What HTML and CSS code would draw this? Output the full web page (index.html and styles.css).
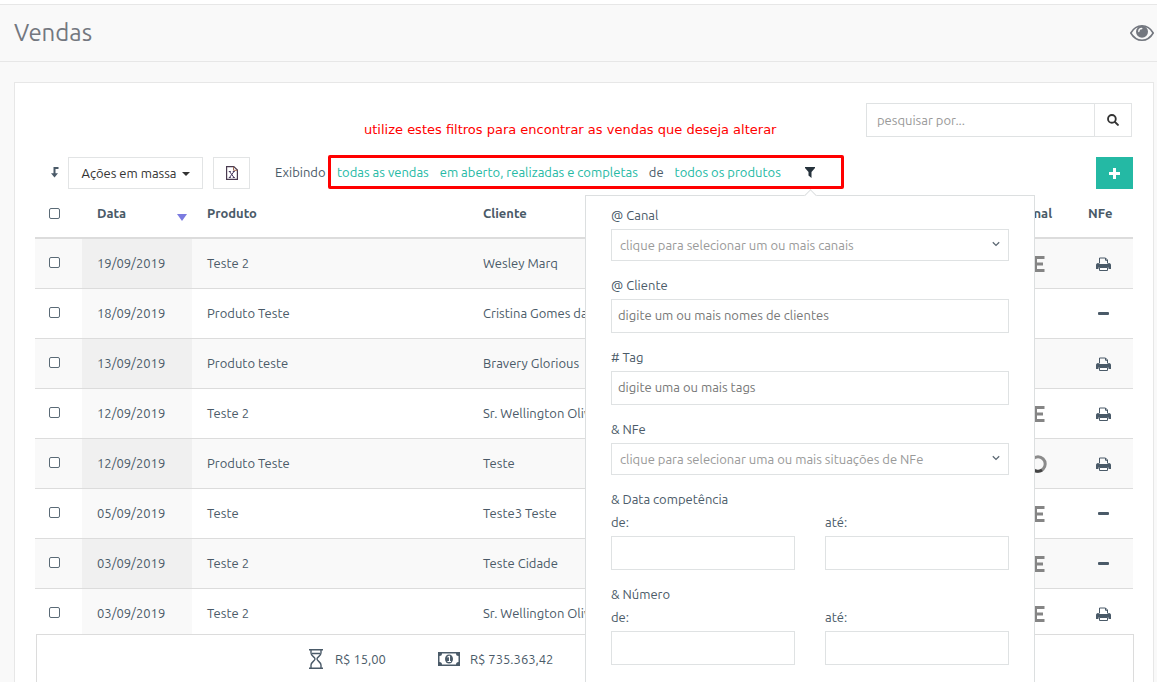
FILE: index.html
```html
<!DOCTYPE html>
<html lang="pt-BR">
<head>
<meta charset="utf-8">
<title>Vendas</title>
<link rel="stylesheet" href="styles.css">
</head>
<body>
<svg class="sprite" aria-hidden="true">
  <symbol id="print" viewBox="0 0 15 14"><path d="M3.500 6.500V1h6l2 2v3.500M9.500 1v2.300h2" fill="none" stroke="currentColor"/><path d="M0 8.200C0 7 .8 6 2 6h.8v1h9.400V6h.8c1.200 0 2 1 2 2.200V12h-2.500v-1.500h-10V12H0z" fill="currentColor"/><path d="M3.500 10.500h8v3h-8z" fill="#fff" stroke="currentColor"/></symbol>
  <symbol id="dash" viewBox="0 0 15 14"><rect x="2" y="5" width="11" height="3" rx="1" fill="currentColor"/></symbol>
  <symbol id="letter" viewBox="0 0 14 18"><path d="M13.500 2.500H4.500v13h9M4.500 9H12" fill="none" stroke="#858585" stroke-width="3"/></symbol>
  <symbol id="ring" viewBox="0 0 18 18"><circle cx="9" cy="9" r="7.200" fill="none" stroke="#8b8b8b" stroke-width="3"/><path d="M3.500 13.700a7.200 7.200 0 0 0 9.500 1.300" fill="none" stroke="#444" stroke-width="3"/></symbol>
  <symbol id="chevron" viewBox="0 0 8 6"><path d="M.8 1.200 4 4.400l3.200-3.200" fill="none" stroke="#5c6873" stroke-width="1.300"/></symbol>
</svg>

<header class="page-header">
  <h1 class="page-title">Vendas</h1>
  <button class="icon-button eye" type="button" aria-label="Visualizar">
    <svg width="24" height="16" viewBox="0 0 24 16"><path d="M.8 8C3.500 3.300 7.300.8 12 .8S20.500 3.300 23.200 8C20.500 12.700 16.700 15.200 12 15.200S3.500 12.700.8 8z" fill="none" stroke="currentColor" stroke-width="1.600"/><circle cx="12" cy="6.800" r="6" fill="currentColor"/><path d="M8.800 6.500a3 3 0 0 1 3-3" fill="none" stroke="#f9f9f9" stroke-width="1.300" stroke-linecap="round"/></svg>
  </button>
</header>

<main class="card">
  <form class="search" role="search">
    <input class="search-input" type="text" placeholder="pesquisar por..." aria-label="Pesquisar">
    <button class="search-button" type="button" aria-label="Pesquisar">
      <svg width="12" height="12" viewBox="0 0 13 13"><circle cx="5.300" cy="5.300" r="4.200" fill="none" stroke="currentColor" stroke-width="2"/><path d="m8.500 8.500 3.300 3.300" stroke="currentColor" stroke-width="2.200" stroke-linecap="round"/></svg>
    </button>
    <p class="note">utilize estes filtros para encontrar as vendas que deseja alterar</p>
  </form>

  <div class="toolbar">
    <svg class="level" width="8" height="11" viewBox="0 0 8 11"><path d="M7.500 1H3.500v6" fill="none" stroke="currentColor" stroke-width="2"/><path d="M0 6.300h7L3.500 10.500z" fill="currentColor"/></svg>
    <button class="button bulk" type="button">Ações em massa <span class="caret"></span></button>
    <button class="button export" type="button" aria-label="Exportar Excel">
      <svg width="12" height="14" viewBox="0 0 12 14"><path d="M.6.600h7.200l3.600 3.500v9.300H.6z" fill="none" stroke="#4a3b50" stroke-width="1.200"/><path d="M7.500.800v3.500h3.700" fill="none" stroke="#a06a50"/><path d="m3.500 5.500 4.500 6M8 5.500l-4.500 6M2.800 5.500h2M6.800 5.500h2M2.800 11.500h2M6.800 11.500h2" fill="none" stroke="#4a3b60"/></svg>
    </button>
    <span class="showing">Exibindo</span>
    <div class="filters">
      <a href="#">todas as vendas</a>
      <a href="#">em aberto, realizadas e completas</a>
      <span>de</span>
      <a href="#">todos os produtos</a>
      <div class="filter-anchor">
        <button class="icon-button" type="button" aria-label="Filtrar">
          <svg width="10" height="11" viewBox="0 0 10 11"><path d="M0 0h10v1L6.500 5v6L3.500 8.500V5L0 1z" fill="#26323c"/></svg>
        </button>
        <form class="popover">
          <div class="field">
            <label for="canal">@ Canal</label>
            <div class="select"><select id="canal"><option>clique para selecionar um ou mais canais</option></select><svg><use href="#chevron"/></svg></div>
          </div>
          <div class="field">
            <label for="cliente">@ Cliente</label>
            <input id="cliente" type="text" placeholder="digite um ou mais nomes de clientes">
          </div>
          <div class="field">
            <label for="tag"># Tag</label>
            <input id="tag" type="text" placeholder="digite uma ou mais tags">
          </div>
          <div class="field">
            <label for="nfe">&amp; NFe</label>
            <div class="select"><select id="nfe"><option>clique para selecionar uma ou mais situações de NFe</option></select><svg><use href="#chevron"/></svg></div>
          </div>
          <fieldset class="field">
            <legend>&amp; Data competência</legend>
            <div class="range">
              <div><label for="data-de">de:</label><input id="data-de" type="text"></div>
              <div><label for="data-ate">até:</label><input id="data-ate" type="text"></div>
            </div>
          </fieldset>
          <fieldset class="field">
            <legend>&amp; Número</legend>
            <div class="range">
              <div><label for="num-de">de:</label><input id="num-de" type="text"></div>
              <div><label for="num-ate">até:</label><input id="num-ate" type="text"></div>
            </div>
          </fieldset>
        </form>
      </div>
    </div>
    <button class="add" type="button" aria-label="Adicionar">
      <svg width="11" height="11" viewBox="0 0 11 11"><path d="M5.500 0v11M0 5.500h11" stroke="#fff" stroke-width="3"/></svg>
    </button>
  </div>

  <div class="table-area">
    <table class="sales">
      <colgroup><col class="c-check"><col class="c-date"><col class="c-product"><col><col class="c-channel"><col class="c-nfe"></colgroup>
      <thead>
        <tr><th><input type="checkbox" aria-label="Selecionar todas"></th><th><span class="sorted">Data <span class="sort"></span></span></th><th>Produto</th><th>Cliente</th><th>Canal</th><th>NFe</th></tr>
      </thead>
      <tbody>
        <tr><td><input type="checkbox" aria-label="Selecionar"></td><td>19/09/2019</td><td>Teste 2</td><td>Wesley Marq</td><td class="mid"><svg class="letter"><use href="#letter"/></svg></td><td class="mid"><svg class="state"><use href="#print"/></svg></td></tr>
        <tr><td><input type="checkbox" aria-label="Selecionar"></td><td>18/09/2019</td><td>Produto Teste</td><td>Cristina Gomes da Silva</td><td></td><td class="mid"><svg class="state"><use href="#dash"/></svg></td></tr>
        <tr><td><input type="checkbox" aria-label="Selecionar"></td><td>13/09/2019</td><td>Produto teste</td><td>Bravery Glorious</td><td></td><td class="mid"><svg class="state"><use href="#print"/></svg></td></tr>
        <tr><td><input type="checkbox" aria-label="Selecionar"></td><td>12/09/2019</td><td>Teste 2</td><td>Sr. Wellington Oliveira</td><td class="mid"><svg class="letter"><use href="#letter"/></svg></td><td class="mid"><svg class="state"><use href="#print"/></svg></td></tr>
        <tr><td><input type="checkbox" aria-label="Selecionar"></td><td>12/09/2019</td><td>Produto Teste</td><td>Teste</td><td class="mid"><svg class="ring"><use href="#ring"/></svg></td><td class="mid"><svg class="state"><use href="#print"/></svg></td></tr>
        <tr><td><input type="checkbox" aria-label="Selecionar"></td><td>05/09/2019</td><td>Teste</td><td>Teste3 Teste</td><td class="mid"><svg class="letter"><use href="#letter"/></svg></td><td class="mid"><svg class="state"><use href="#dash"/></svg></td></tr>
        <tr><td><input type="checkbox" aria-label="Selecionar"></td><td>03/09/2019</td><td>Teste 2</td><td>Teste Cidade</td><td class="mid"><svg class="letter"><use href="#letter"/></svg></td><td class="mid"><svg class="state"><use href="#dash"/></svg></td></tr>
        <tr><td><input type="checkbox" aria-label="Selecionar"></td><td>03/09/2019</td><td>Teste 2</td><td>Sr. Wellington Oliveira</td><td class="mid"><svg class="letter"><use href="#letter"/></svg></td><td class="mid"><svg class="state"><use href="#print"/></svg></td></tr>
      </tbody>
    </table>
  </div>

  <footer class="totals">
    <span class="total"><svg width="16" height="20" viewBox="0 0 16 20"><path d="M0 .800h14M0 19.200h14M2 1v3c0 3 4 4 4 6s-4 3-4 6v3M12 1v3c0 3-4 4-4 6s4 3 4 6v3M3 4.500h8" fill="none" stroke="currentColor" stroke-width="1.400"/></svg>R$ 15,00</span>
    <span class="total"><svg width="22" height="14" viewBox="0 0 22 14"><path fill-rule="evenodd" d="M0 0h22v14H0zM4 1.500A2.500 2.500 0 0 1 1.500 4v6A2.500 2.500 0 0 1 4 12.500h14a2.500 2.500 0 0 1 2.500-2.500V4A2.500 2.500 0 0 1 18 1.500z" fill="currentColor"/><ellipse cx="11" cy="7" rx="4" ry="4.500" fill="currentColor"/><path d="M9.500 5.200 11 4.300h.5v5M9.500 9.500h3.500" fill="none" stroke="#fff" stroke-width="1.100"/></svg>R$ 735.363,42</span>
  </footer>
</main>
</body>
</html>
```

FILE: styles.css
```css
* { box-sizing: border-box; }

body {
  display: flex;
  flex-direction: column;
  height: 100vh;
  margin: 0;
  overflow: hidden;
  border-top: 4px solid #fff;
  background: #f9f9f9;
  color: #4a5a68;
  font: 13px/18px Ubuntu, "Noto Sans", sans-serif;
}

button, input, select { font: inherit; color: inherit; }
button { display: inline-flex; align-items: center; justify-content: center; cursor: pointer; }
svg { display: block; flex: none; }
.sprite { position: absolute; width: 0; height: 0; }

.page-header {
  display: flex;
  align-items: center;
  justify-content: space-between;
  height: 58px;
  padding: 0 3px 0 14px;
  border: solid #e7e7e7;
  border-width: 1px 0;
  color: #73777f;
}
.page-title { margin: 0; font-size: 24px; line-height: 32px; font-weight: 400; }
.icon-button { padding: 0; border: 0; background: none; }

.card {
  display: flex;
  flex-direction: column;
  flex: 1;
  min-height: 0;
  margin: 20px 3px 0 14px;
  padding: 20px 20px 0;
  border: 1px solid #e7e7e7;
  border-bottom: 0;
  background: #fff;
}

.search { position: relative; display: flex; justify-content: flex-end; padding-right: 1px; }
.search-input {
  width: 228px;
  height: 34px;
  padding: 0 10px;
  border: 1px solid #dfe2e3;
  border-right: 0;
  outline: 0;
}
.search-button { width: 38px; height: 34px; padding: 0; border: 1px solid #e2e4e5; background: #fff; color: #333; }
::placeholder { color: #999; opacity: 1; }
.note {
  position: absolute;
  top: 18px;
  left: 329px;
  margin: 0;
  color: #f00;
  font: 13px/18px "DejaVu Sans", sans-serif;
}

.toolbar { display: flex; align-items: flex-end; height: 34px; margin-top: 18px; }
.toolbar > .level { align-self: center; margin: 0 9px 0 16px; }
.button { height: 32px; padding: 0; border: 1px solid #e2e4e5; background: #fff; color: #333; white-space: nowrap; }
.bulk { width: 135px; gap: 5px; margin-right: 10px; }
.export { width: 37px; margin-right: 25px; }
.caret { margin-top: 2px; border: 4px solid transparent; border-top-color: #333; border-bottom: 0; }
.showing { width: 53px; line-height: 34px; white-space: nowrap; }
.filters {
  display: flex;
  align-items: center;
  gap: 11px;
  width: 516px;
  height: 34px;
  padding: 0 26px 0 6px;
  border: 3px solid #f00;
  border-radius: 2px;
  white-space: nowrap;
}
.filters a { color: #24b9a4; text-decoration: none; }
.filter-anchor { position: relative; display: flex; margin-left: auto; }
.add { width: 37px; height: 32px; margin-left: auto; padding: 0; border: 0; background: #24b9a4; }

.popover {
  position: absolute;
  top: 28px;
  left: 50%;
  z-index: 2;
  width: 450px;
  padding: 10px 25px;
  transform: translateX(-50%);
  border: 1px solid #dcdfe0;
  background: #fff;
}
.popover::before {
  content: "";
  position: absolute;
  top: -5px;
  left: 220px;
  width: 8px;
  height: 8px;
  transform: rotate(45deg);
  border: solid #dcdfe0;
  border-width: 1px 0 0 1px;
  background: #fff;
}
.field { margin: 0 0 15px; padding: 0; border: 0; min-width: 0; }
.field label, .field legend { display: block; margin: 0 0 5px; padding: 0; }
.field input { display: block; width: 100%; height: 34px; padding: 0 6px 2px; border: 1px solid #dfe2e3; background: #fff; outline: 0; }
.field input::placeholder { color: #777; }
.select { position: relative; }
.select select { display: block; width: 100%; height: 32px; padding: 0 8px; border: 1px solid #dfe2e3; border-radius: 0; appearance: none; background: #fff; color: #999; }
.select svg { position: absolute; top: 12px; right: 9px; width: 8px; height: 6px; }
.range { display: grid; grid-template-columns: 1fr 1fr; gap: 30px; }

.table-area { flex: 1; min-height: 0; overflow: hidden; }
.sales { width: 100%; table-layout: fixed; border-collapse: separate; border-spacing: 0; }
.c-check { width: 47px; }
.c-date { width: 110px; }
.c-product { width: 276px; }
.c-channel { width: 70px; }
.c-nfe { width: 60px; }
.sales th, .sales td { height: 50px; padding: 0 15px; border-bottom: 1px solid #dcdcdc; text-align: left; white-space: nowrap; }
.sales th { border-bottom-width: 2px; font-weight: 700; }
.sales td { padding-bottom: 2px; }
.sales th:first-child, .sales td:first-child { padding-left: 14px; }
.sales tbody tr:nth-child(odd) { background: #f9f9f9; }
.sales td:nth-child(2) { background: #f9f9f9; }
.sales tbody tr:nth-child(odd) td:nth-child(2) { background: #f0f0f0; }
.sales .mid { padding: 0; text-align: center; }
.sales .mid svg { margin: 0 auto; }
.sorted { display: flex; justify-content: space-between; align-items: center; margin-right: -10px; }
.sort { margin-top: 8px; border: 5px solid transparent; border-top: 7px solid #7b7be0; border-bottom: 0; }
.sales input { display: block; appearance: none; width: 11px; height: 11px; margin: 0; border: 1px solid #5a6a76; border-radius: 2px; background: #fff; }
.state { width: 15px; height: 14px; }
.letter { width: 14px; height: 18px; }
.ring { width: 18px; height: 18px; }

.totals {
  display: flex;
  align-items: center;
  gap: 52px;
  height: 48px;
  margin: 0 -1px 0 1px;
  padding-left: 272px;
  border: 1px solid #dcdcdc;
  border-bottom: 0;
  flex: none;
}
.total { display: flex; align-items: center; gap: 10px; }
```
